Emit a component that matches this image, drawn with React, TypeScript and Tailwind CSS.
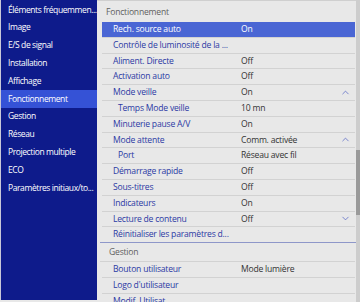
import { ChevronDown, ChevronUp } from "lucide-react";

const sections = [
  "Éléments fréquemmen...",
  "Image",
  "E/S de signal",
  "Installation",
  "Affichage",
  "Fonctionnement",
  "Gestion",
  "Réseau",
  "Projection multiple",
  "ECO",
  "Paramètres initiaux/to...",
];

type Row = { label: string; value?: string; sub?: boolean; icon?: "up" | "down"; active?: boolean };

const rows: Row[] = [
  { label: "Rech. source auto", value: "On", active: true },
  { label: "Contrôle de luminosité de la ..." },
  { label: "Aliment. Directe", value: "Off" },
  { label: "Activation auto", value: "Off" },
  { label: "Mode veille", value: "On", icon: "up" },
  { label: "Temps Mode veille", value: "10 mn", sub: true },
  { label: "Minuterie pause A/V", value: "On" },
  { label: "Mode attente", value: "Comm. activée", icon: "up" },
  { label: "Port", value: "Réseau avec fil", sub: true },
  { label: "Démarrage rapide", value: "Off" },
  { label: "Sous-titres", value: "Off" },
  { label: "Indicateurs", value: "On" },
  { label: "Lecture de contenu", value: "Off", icon: "down" },
  { label: "Réinitialiser les paramètres d..." },
];

const gestion: Row[] = [
  { label: "Bouton utilisateur", value: "Mode lumière" },
  { label: "Logo d'utilisateur" },
  { label: "Modif. Utilisat..." },
];

function SettingRow({ row }: { row: Row }) {
  return (
    <div
      className={`flex items-center h-[15.8px] shrink-0 ml-[5px] mr-[1px] border-b border-[#d2d2d2] ${
        row.active ? "bg-[#4a66d4] text-white" : ""
      }`}
    >
      <span
        className={`w-[139px] shrink-0 whitespace-nowrap ${row.sub ? "pl-[16px]" : "pl-[11px]"} ${
          row.active ? "text-white" : "text-[#2b39a4]"
        }`}
      >
        {row.label}
      </span>
      <span className={`flex-1 whitespace-nowrap ${row.active ? "text-white" : "text-[#333333]"}`}>{row.value}</span>
      {row.icon === "up" && <ChevronUp size={11} strokeWidth={1.6} className="mr-[4px] text-[#5263c4]" />}
      {row.icon === "down" && <ChevronDown size={11} strokeWidth={1.6} className="mr-[4px] text-[#5263c4]" />}
    </div>
  );
}

export default function App() {
  return (
    <div
      className="flex w-[360px] h-[302px] overflow-hidden text-[8.6px] tracking-[-0.22px] leading-none bg-[#e8e8e8]"
      style={{ fontFamily: '"Open Sans", "Noto Sans", sans-serif' }}
    >
      <aside className="w-[97px] shrink-0 h-[300px] bg-[#0e1b8b] border-l border-[#c8c8d8] flex flex-col pt-[1px] overflow-hidden text-[8.5px] tracking-[-0.4px]">
        {sections.map((s) => (
          <div
            key={s}
            className={`h-[17.8px] shrink-0 flex items-center pl-[7px] text-white whitespace-nowrap ${
              s === "Fonctionnement" ? "bg-[#3552d6]" : ""
            }`}
          >
            {s}
          </div>
        ))}
      </aside>
      <main className="flex-1 flex flex-col border-t border-[#cfcfcf] pt-[1px] overflow-hidden">
        <div className="h-[20px] shrink-0 flex items-center pl-[9px] text-[#5f5f5f]">Fonctionnement</div>
        {rows.map((r) => (
          <SettingRow key={r.label} row={r} />
        ))}
        <div className="h-[1.5px] shrink-0 bg-[#8e97c9] -mt-[1.5px] ml-[3px]" />
        <div className="h-[19px] shrink-0 flex items-center pl-[9px] text-[#5f5f5f] border-b border-[#d2d2d2] ml-[3px] mr-[1px]">
          Gestion
        </div>
        {gestion.map((r) => (
          <SettingRow key={r.label} row={r} />
        ))}
      </main>
      <div className="w-[4px] shrink-0 flex flex-col bg-[#cdcdcd]">
        <div className="h-[150px] shrink-0" />
        <div className="h-[65px] shrink-0 bg-[#9a9a9a]" />
      </div>
    </div>
  );
}
